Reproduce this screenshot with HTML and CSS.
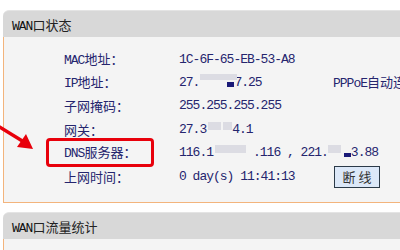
FILE: index.html
```html
<!DOCTYPE html>
<html>
<head>
<meta charset="utf-8">
<link rel="stylesheet" href="styles.css">
</head>
<body>
<div class="page">
  <section class="panel">
    <div class="panel-head"><span class="m">WAN</span>口状态</div>
    <div class="panel-body">
      <div class="grid">
        <div class="label"><span class="m">MAC</span>地址：</div>
        <div class="value m">1C-6F-65-EB-53-A8</div>
        <div></div>

        <div class="label"><span class="m">IP</span>地址：</div>
        <div class="value m">27.<span class="blur w35"><i class="g b1"></i><i class="n b2"></i></span>7.25</div>
        <div class="value"><span class="m">PPPoE</span>自动连接</div>

        <div class="label">子网掩码：</div>
        <div class="value m">255.255.255.255</div>
        <div></div>

        <div class="label">网关：</div>
        <div class="value m">27.3<span class="blur w26"><i class="g b3"></i><i class="g b4"></i></span>4.1</div>
        <div></div>

        <div class="label"><span class="m">DNS</span>服务器：</div>
        <div class="value m">116.1<span class="blur w40"><i class="g b5"></i></span>.116 , 221.<span class="blur w23"><i class="g b6"></i><i class="n b7"></i></span>3.88</div>
        <div></div>

        <div class="label">上网时间：</div>
        <div class="value m">0 day(s) 11:41:13</div>
        <div><button class="btn">断线</button></div>
      </div>
    </div>
  </section>
  <section class="panel panel-2">
    <div class="panel-head"><span class="m">WAN</span>口流量统计</div>
    <div class="panel-body short"></div>
  </section>

  <svg class="arrow" width="45" height="45" viewBox="0 0 45 45">
    <line x1="-2" y1="11" x2="24" y2="27" stroke="#e8000b" stroke-width="3.5"/>
    <polygon points="33,34 17,32 26,19" fill="#e8000b"/>
  </svg>
  <div class="mark"></div>
</div>
</body>
</html>
```
FILE: styles.css
```css
html, body {
  margin: 0;
  padding: 0;
  background: #ffffff;
}
body {
  width: 400px;
  height: 250px;
  overflow: hidden;
  font-family: "Noto Sans CJK SC", "Liberation Sans", sans-serif;
  font-size: 13px;
}
.page {
  position: relative;
  padding: 10px 0 0 3px;
  width: 397px;
  height: 240px;
  overflow: hidden;
}
.panel {
  width: 440px;
}
.panel-head {
  height: 27px;
  line-height: 27px;
  box-sizing: border-box;
  background: #d8d8d8;
  border-top: 1px solid #e4e4e4;
  border-top-left-radius: 6px;
  padding-left: 9px;
  color: #222222;
  font-size: 13px;
}
.panel-head .m {
  color: #111111;
}
.panel-body {
  background: #f4f4f4;
  border-left: 1px solid #f3b47c;
  border-bottom: 1px solid #f3b47c;
  padding: 11px 0 14px 60px;
}
.panel-body.short {
  height: 20px;
  padding: 0;
  border-bottom: none;
}
.panel-2 {
  margin-top: 9px;
}
.grid {
  display: grid;
  grid-template-columns: 115px 154px 110px;
  grid-auto-rows: 23.4px;
  align-items: center;
  color: #25256e;
}
.label, .value {
  white-space: nowrap;
  line-height: 16px;
}
.m {
  font-family: "Liberation Mono", "DejaVu Sans Mono", monospace;
  font-size: 13px;
  letter-spacing: -1px;
}
.blur {
  display: inline-block;
  position: relative;
  height: 13px;
  vertical-align: -2px;
  letter-spacing: 0;
}
.blur i {
  position: absolute;
  display: block;
}
.blur .g { background: #dcdce3; }
.blur .n { background: #1a1a78; }
.w35 { width: 35px; }
.w26 { width: 26px; }
.w40 { width: 40px; }
.w23 { width: 23px; }
.b1 { left: 1px; top: -1px; width: 37px; height: 6px; }
.b2 { left: 28px; top: 7px; width: 7px; height: 5px; }
.b3 { left: 2px; top: 0px; width: 13px; height: 8px; }
.b4 { left: 17px; top: 0px; width: 9px; height: 8px; }
.b5 { left: 2px; top: 0px; width: 31px; height: 8px; }
.b6 { left: 0px; top: 0px; width: 13px; height: 8px; }
.b7 { left: 16px; top: 8px; width: 7px; height: 4px; }
.btn {
  display: block;
  width: 46px;
  height: 22px;
  margin: 0 0 0 1px;
  padding: 0;
  box-sizing: border-box;
  background: #dce8f8;
  border: 1px solid #2b3a48;
  font-family: "Noto Sans CJK SC", sans-serif;
  font-size: 13px;
  letter-spacing: 3px;
  text-indent: 3px;
  color: #333333;
  line-height: 18px;
}
.arrow {
  position: absolute;
  left: 0;
  top: 115px;
}
.mark {
  position: absolute;
  left: 46px;
  top: 138px;
  width: 108px;
  height: 29px;
  box-sizing: border-box;
  border: 3px solid #e8000b;
  border-radius: 4px;
}
```
